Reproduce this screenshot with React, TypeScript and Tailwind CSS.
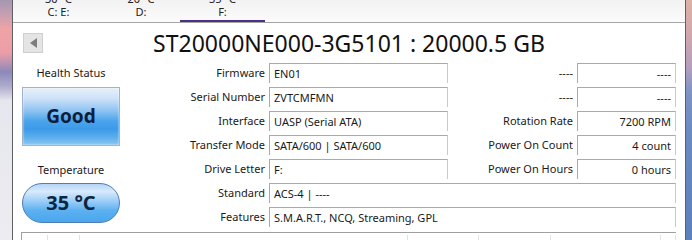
const rows = [
  { label: "Firmware", value: "EN01", sideLabel: "----", sideValue: "----" },
  { label: "Serial Number", value: "ZVTCMFMN", sideLabel: "----", sideValue: "----" },
  { label: "Interface", value: "UASP (Serial ATA)", sideLabel: "Rotation Rate", sideValue: "7200 RPM" },
  { label: "Transfer Mode", value: "SATA/600 | SATA/600", sideLabel: "Power On Count", sideValue: "4 count" },
  { label: "Drive Letter", value: "F:", sideLabel: "Power On Hours", sideValue: "0 hours" },
];

const wideRows = [
  { label: "Standard", value: "ACS-4 | ----" },
  { label: "Features", value: "S.M.A.R.T., NCQ, Streaming, GPL" },
];

const tabs = [
  { temp: "30 °C", letter: "C: E:", width: "w-[87px] ml-[2px]", active: false },
  { temp: "20 °C", letter: "D:", width: "w-[78px]", active: false },
  { temp: "35 °C", letter: "F:", width: "w-[85px]", active: true },
];

const tableCols = ["w-[26px]", "w-[32px]", "w-[328px]", "w-[71px]", "w-[72px]", "w-[110px]", "flex-1"];

function ValueBox({ children, right }: { children: React.ReactNode; right?: boolean }) {
  return (
    <div
      className={`h-[20px] truncate border-l border-r border-t border-l-[#a9a9a9] border-r-[#c9c9c9] border-t-[#a9a9a9] px-[4px] leading-[19px] text-[#1a1a1a] ${right ? "text-right" : ""}`}
    >
      {children}
    </div>
  );
}

function Label({ children }: { children: React.ReactNode }) {
  return <div className="pr-[4px] text-right leading-[20px] text-[#1a1a1a]">{children}</div>;
}

export default function App() {
  return (
    <div className="flex h-[240px] w-[692px] overflow-hidden bg-white font-['Noto_Sans',sans-serif] text-[11px]">
      <div className="w-[12px] shrink-0 bg-[linear-gradient(180deg,#a497b2_0%,#c79fb0_6%,#efa3a6_12%,#ec9ea8_22%,#8d88bb_30%,#aeaccc_36%,#e6e6ee_42%,#ececf1_100%)]" />

      <div className="flex w-[674px] shrink-0 flex-col border-x border-x-[#5f5f66] bg-white">
        {/* drive tabs */}
        <div className="flex h-[23px] shrink-0 overflow-hidden border-b border-[#a6a6a6] bg-[linear-gradient(180deg,#f2f2f2,#fbfbfb)]">
          {tabs.map((tab) => (
            <div
              key={tab.letter}
              className={`flex shrink-0 flex-col items-center ${tab.width} ${tab.active ? "border-b-2 border-[#4a2f8c]" : ""}`}
            >
              <span className="-mt-[8px] leading-[13px] text-[#222]">{tab.temp}</span>
              <span className="leading-[13px] text-[#222]">{tab.letter}</span>
            </div>
          ))}
        </div>

        {/* title */}
        <div className="mt-[5px] flex h-[30px] items-center">
          <button
            type="button"
            className="ml-[10px] flex h-[20px] w-[20px] shrink-0 items-center justify-center border border-[#cfcfcf] bg-[#e4e4e4]"
            aria-label="Previous drive"
          >
            <span className="h-0 w-0 border-y-[5px] border-r-[7px] border-y-transparent border-r-[#7d7d7d]" />
          </button>
          <div className="flex-1 text-center text-[23px] leading-[30px] text-[#111]">
            ST20000NE000-3G5101 : 20000.5 GB
          </div>
          <div className="mr-[10px] w-[20px] shrink-0" />
        </div>

        <div className="mt-[5px] flex">
          {/* health + temperature */}
          <div className="ml-[9px] flex w-[98px] shrink-0 flex-col">
            <div className="text-center leading-[20px] text-[#1a1a1a]">Health Status</div>
            <div className="mt-[4px] flex h-[59px] items-center justify-center border border-[#9fb4cd] bg-[linear-gradient(180deg,#e6effb_0%,#cfe2f8_18%,#8ec3f2_40%,#4aa4ec_58%,#3b9ae8_72%,#5fb0ee_88%,#8cc6f2_100%)] shadow-[inset_0_0_2px_rgba(255,255,255,0.9)]">
              <span className="text-[19px] font-bold text-[#0d1e3d]">Good</span>
            </div>
            <div className="mt-[14px] text-center leading-[20px] text-[#1a1a1a]">Temperature</div>
            <div className="mt-[3px] flex h-[40px] items-center justify-center rounded-full border border-[#4f7db5] bg-[linear-gradient(180deg,#b5d5f6_0%,#d8eafc_20%,#9ccdf6_45%,#5cb0f0_70%,#49a6ee_100%)]">
              <span className="text-[20px] font-bold text-[#0b2642]">35 °C</span>
            </div>
          </div>

          {/* info grid */}
          <div className="grid shrink-0 grid-cols-[149px_179px_129px_99px] gap-y-[4px]">
            {rows.map((row) => (
              <div key={row.label} className="contents">
                <Label>{row.label}</Label>
                <ValueBox>{row.value}</ValueBox>
                <Label>{row.sideLabel}</Label>
                <ValueBox right>{row.sideValue}</ValueBox>
              </div>
            ))}
            {wideRows.map((row) => (
              <div key={row.label} className="contents">
                <Label>{row.label}</Label>
                <div className="col-span-3">
                  <ValueBox>{row.value}</ValueBox>
                </div>
              </div>
            ))}
          </div>
        </div>

        {/* smart table header */}
        <div className="ml-[8px] mt-[5px] flex h-[12px] w-[655px] border-l border-t border-[#a0a0a0] bg-white">
          {tableCols.map((w, i) => (
            <div key={i} className={`${w} mt-[2px] border-r border-[#e2e2e2]`} />
          ))}
        </div>
      </div>

      <div className="flex-1 bg-[linear-gradient(180deg,#dcb1a6_0%,#d2a7ad_14%,#b59fbd_28%,#7f93c4_38%,#6a8ac2_55%,#5b80bd_100%)]" />
    </div>
  );
}
